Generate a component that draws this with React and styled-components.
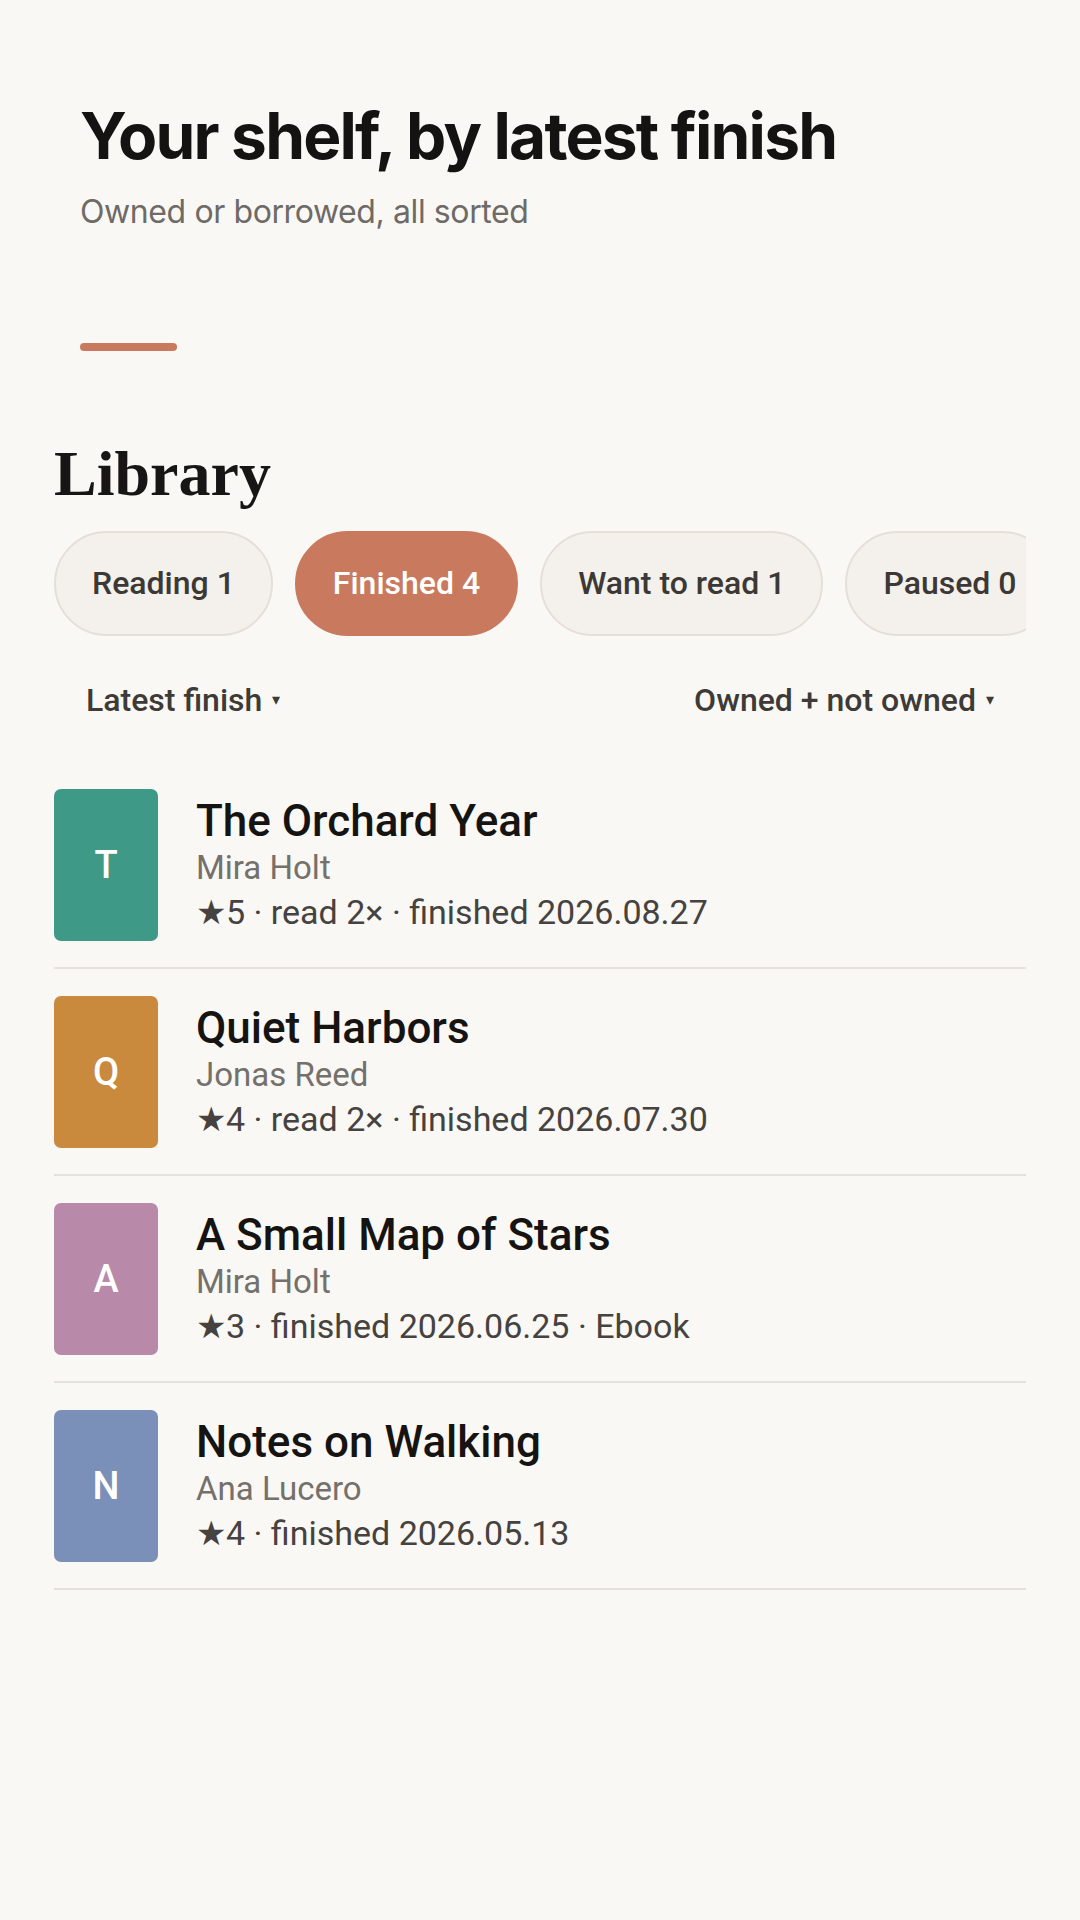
import React from "react";
import styled, { createGlobalStyle } from "styled-components";

const GlobalStyle = createGlobalStyle`
  html, body {
    margin: 0;
    padding: 0;
    background: #faf8f5;
  }
  body {
    font-family: Roboto, "Noto Sans", sans-serif;
    color: #1a1816;
  }
`;

const filters = [
  { label: "Reading", count: 1 },
  { label: "Finished", count: 4, active: true },
  { label: "Want to read", count: 1 },
  { label: "Paused", count: 0 },
];

const books = [
  {
    title: "The Orchard Year",
    author: "Mira Holt",
    meta: "★5 · read 2× · finished 2026.08.27",
    color: "#3e9a87",
  },
  {
    title: "Quiet Harbors",
    author: "Jonas Reed",
    meta: "★4 · read 2× · finished 2026.07.30",
    color: "#c98a3e",
  },
  {
    title: "A Small Map of Stars",
    author: "Mira Holt",
    meta: "★3 · finished 2026.06.25 · Ebook",
    color: "#b889a8",
  },
  {
    title: "Notes on Walking",
    author: "Ana Lucero",
    meta: "★4 · finished 2026.05.13",
    color: "#7a90b8",
  },
];

export default function App() {
  return (
    <>
      <GlobalStyle />
      <Page>
        <Header>
          <Title>Your shelf, by latest finish</Title>
          <Subtitle>Owned or borrowed, all sorted</Subtitle>
          <Accent />
        </Header>

        <SectionTitle>Library</SectionTitle>

        <ChipRow>
          {filters.map((f) => (
            <Chip key={f.label} $active={f.active}>
              {f.label} {f.count}
            </Chip>
          ))}
        </ChipRow>

        <SortRow>
          <SortButton>
            Latest finish <Caret>▾</Caret>
          </SortButton>
          <SortButton>
            Owned + not owned <Caret>▾</Caret>
          </SortButton>
        </SortRow>

        <List>
          {books.map((b) => (
            <Row key={b.title}>
              <Cover $color={b.color}>{b.title[0]}</Cover>
              <Info>
                <BookTitle>{b.title}</BookTitle>
                <Author>{b.author}</Author>
                <Meta>{b.meta}</Meta>
              </Info>
            </Row>
          ))}
        </List>
      </Page>
    </>
  );
}

const Page = styled.div`
  padding: 0 54px 80px;
`;

const Header = styled.header`
  padding: 98px 26px 0;
  display: flex;
  flex-direction: column;
`;

const Title = styled.h1`
  margin: 0;
  font-family: Inter, "Liberation Sans", sans-serif;
  font-weight: 700;
  font-size: 64px;
  line-height: 1.2;
  letter-spacing: -1.8px;
  color: #141311;
`;

const Subtitle = styled.p`
  margin: 16px 0 0;
  font-family: Inter, "Liberation Sans", sans-serif;
  font-weight: 400;
  font-size: 32px;
  line-height: 1.3;
  letter-spacing: -0.4px;
  color: #6e6a66;
`;

const Accent = styled.div`
  margin-top: 111px;
  width: 97px;
  height: 8px;
  border-radius: 4px;
  background: #c97a5e;
`;

const SectionTitle = styled.h2`
  margin: 88px 0 0;
  font-family: "Liberation Serif", "DejaVu Serif", serif;
  font-weight: 700;
  font-size: 64px;
  line-height: 1.1;
  color: #181614;
`;

const ChipRow = styled.div`
  margin-top: 21px;
  display: flex;
  gap: 22px;
  overflow: hidden;
`;

const Chip = styled.button`
  flex: 0 0 auto;
  height: 105px;
  padding: 0 36px;
  border-radius: 53px;
  border: 2px solid ${(p) => (p.$active ? "#c97a5e" : "#e6dfd8")};
  background: ${(p) => (p.$active ? "#c97a5e" : "#f4f0eb")};
  color: ${(p) => (p.$active ? "#ffffff" : "#3b3835")};
  font-family: Roboto, "Noto Sans", sans-serif;
  font-weight: 500;
  font-size: 32px;
  white-space: nowrap;
`;

const SortRow = styled.div`
  margin-top: 46px;
  padding: 0 32px;
  display: flex;
  justify-content: space-between;
  align-items: center;
`;

const SortButton = styled.button`
  border: none;
  background: none;
  padding: 0;
  display: inline-flex;
  align-items: center;
  gap: 10px;
  font-family: Roboto, "Noto Sans", sans-serif;
  font-weight: 500;
  font-size: 32px;
  line-height: 36px;
  color: #3d3a37;
`;

const Caret = styled.span`
  font-size: 16px;
  color: #3d3a37;
`;

const List = styled.div`
  margin-top: 44px;
  display: flex;
  flex-direction: column;
`;

const Row = styled.div`
  display: flex;
  align-items: center;
  gap: 38px;
  padding: 27px 0 26px;
  border-bottom: 2px solid #e6e1db;
`;

const Cover = styled.div`
  flex: 0 0 auto;
  width: 104px;
  height: 152px;
  border-radius: 7px;
  background: ${(p) => p.$color};
  color: #ffffff;
  display: flex;
  align-items: center;
  justify-content: center;
  font-family: Roboto, "Noto Sans", sans-serif;
  font-weight: 500;
  font-size: 38px;
`;

const Info = styled.div`
  display: flex;
  flex-direction: column;
  min-width: 0;
`;

const BookTitle = styled.div`
  font-family: Roboto, "Noto Sans", sans-serif;
  font-weight: 500;
  font-size: 44px;
  line-height: 50px;
  color: #161412;
`;

const Author = styled.div`
  font-family: Roboto, "Noto Sans", sans-serif;
  font-weight: 400;
  font-size: 33px;
  line-height: 44px;
  color: #74706b;
`;

const Meta = styled.div`
  font-family: Roboto, "Noto Sans", sans-serif;
  font-weight: 400;
  font-size: 34px;
  line-height: 44px;
  color: #45423f;
`;
